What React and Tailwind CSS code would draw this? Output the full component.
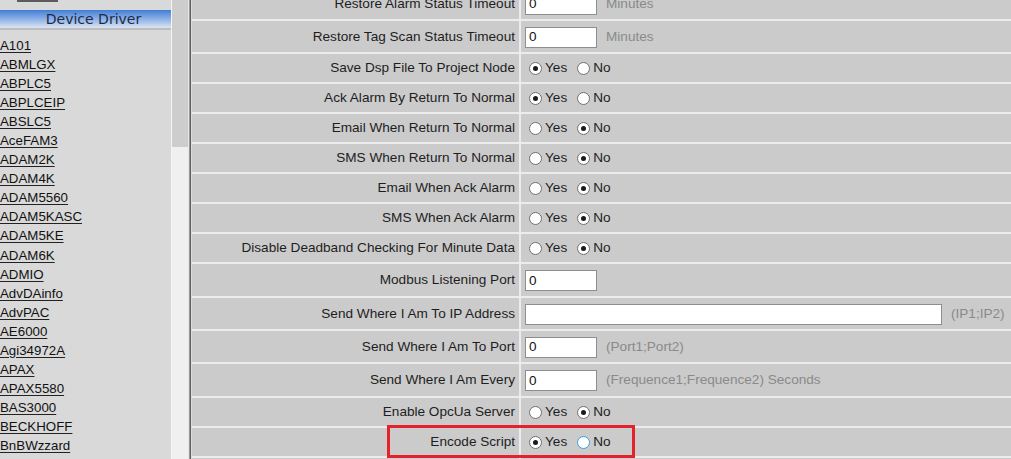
import React from "react";

const drivers = [
  "A101","ABMLGX","ABPLC5","ABPLCEIP","ABSLC5","AceFAM3","ADAM2K","ADAM4K","ADAM5560","ADAM5KASC","ADAM5KE","ADAM6K","ADMIO","AdvDAinfo","AdvPAC","AE6000","Agi34972A","APAX","APAX5580","BAS3000","BECKHOFF","BnBWzzard"
];

const rows = [
  { label: "Restore Alarm Status Timeout", type: "input", value: "0", hint: "Minutes", h: "h-[33px]" },
  { label: "Restore Tag Scan Status Timeout", type: "input", value: "0", hint: "Minutes", h: "h-[33px]" },
  { label: "Save Dsp File To Project Node", type: "radio", yes: true, h: "h-[30px]" },
  { label: "Ack Alarm By Return To Normal", type: "radio", yes: true, h: "h-[30px]" },
  { label: "Email When Return To Normal", type: "radio", yes: false, h: "h-[30px]" },
  { label: "SMS When Return To Normal", type: "radio", yes: false, h: "h-[30px]" },
  { label: "Email When Ack Alarm", type: "radio", yes: false, h: "h-[30px]" },
  { label: "SMS When Ack Alarm", type: "radio", yes: false, h: "h-[30px]" },
  { label: "Disable Deadband Checking For Minute Data", type: "radio", yes: false, h: "h-[30px]" },
  { label: "Modbus Listening Port", type: "input", value: "0", hint: "", h: "h-[34px]" },
  { label: "Send Where I Am To IP Address", type: "wide", value: "", hint: "(IP1;IP2)", h: "h-[33px]" },
  { label: "Send Where I Am To Port", type: "input", value: "0", hint: "(Port1;Port2)", h: "h-[33px]" },
  { label: "Send Where I Am Every", type: "input", value: "0", hint: "(Frequence1;Frequence2) Seconds", h: "h-[34px]" },
  { label: "Enable OpcUa Server", type: "radio", yes: false, h: "h-[30px]" },
  { label: "Encode Script", type: "radio", yes: true, hoverNo: true, h: "h-[30px]", boxed: true },
  { label: "", type: "blank", h: "h-[30px]" },
];

function Radio({ checked, hover, first }) {
  return (
    <span
      className={`inline-flex items-center justify-center w-[13px] h-[13px] rounded-full bg-white border shrink-0 ${
        hover ? "border-[#3d9be0]" : "border-[#707070]"
      } ${first ? "ml-[5px]" : "ml-[6px]"} mr-[3px]`}
    >
      {checked && <span className="w-[5px] h-[5px] rounded-full bg-[#1a1a1a]" />}
    </span>
  );
}

function TextBox({ value, wide }) {
  return (
    <span
      className={`ml-[1px] inline-flex items-center h-[21px] ${wide ? "w-[417px]" : "w-[72px]"} bg-white border border-[#8e8e8e] pl-[3px] text-[13.5px] text-[#111] leading-none shrink-0`}
    >
      {value}
    </span>
  );
}

function Row({ r }) {
  return (
    <div className={`relative flex ${r.h} border-b-2 border-[#ececec]`}>
      <div className="w-[327px] shrink-0 flex items-center justify-end pr-[4px] pt-[1px] text-[13.6px] text-[#1e1e1e]">
        {r.label}
      </div>
      <div className="flex-1 flex items-center border-l-2 border-[#ececec] pl-[3px] pt-[1px] text-[13.6px] text-[#1e1e1e]">
        {r.type === "radio" && (
          <>
            <Radio checked={r.yes} first />
            <span>Yes</span>
            <span className="w-[4px]" />
            <Radio checked={!r.yes} hover={r.hoverNo} />
            <span>No</span>
          </>
        )}
        {(r.type === "input" || r.type === "wide") && (
          <>
            <TextBox value={r.value} wide={r.type === "wide"} />
            {r.hint && <span className="ml-[9px] text-[#8a8a8a]">{r.hint}</span>}
          </>
        )}
      </div>
      {r.boxed && (
        <div className="absolute left-[195px] top-[-3px] w-[248px] h-[33px] border-[3px] border-[#e3222b] pointer-events-none" />
      )}
    </div>
  );
}

export default function App() {
  return (
    <div
      className="flex w-[1011px] h-[459px] overflow-hidden bg-[#cbcbcb]"
      style={{ fontFamily: '"Liberation Sans", Arial, sans-serif' }}
    >
      {/* sidebar */}
      <div className="w-[172px] shrink-0 h-full bg-[#d9d9d9] border-r border-[#f4f4f4] overflow-hidden">
        <div className="h-[10px]">
          <div className="ml-[17px] w-[41px] h-[2px] bg-[#5c5c5c]" />
        </div>
        <div
          className="h-[18px] flex items-center justify-center pl-[16px] text-[14px] text-[#1d2b48] bg-gradient-to-b from-[#3f7ed6] via-[#8db0e6] to-[#dde5f1]"
          style={{ fontFamily: '"DejaVu Sans", Verdana, sans-serif' }}
        >
          Device Driver
        </div>
        <div className="h-[2px] bg-[#bdbdbd]" />
        <div className="pt-[6px]">
          {drivers.map((d) => (
            <div key={d} className="h-[19.05px] leading-[19px] text-[13.3px] text-[#111]">
              <span className="underline underline-offset-[2px] decoration-[#222]">{d}</span>
            </div>
          ))}
        </div>
      </div>
      {/* scrollbar */}
      <div className="w-[16px] shrink-0 h-full bg-[#f0f0f0]">
        <div className="h-[147px] bg-[#cdcdcd]" />
      </div>
      {/* divider */}
      <div className="w-[4px] shrink-0 h-full flex">
        <div className="w-[1px] bg-[#e6e6e6]" />
        <div className="w-[1px] bg-[#9a9a9a]" />
        <div className="w-[1px] bg-[#5e5e5e]" />
        <div className="w-[1px] bg-[#dcdcdc]" />
      </div>
      {/* table */}
      <div className="flex-1 h-full">
        <div className="-mt-[12px]">
          {rows.map((r, i) => (
            <Row key={i} r={r} />
          ))}
        </div>
      </div>
    </div>
  );
}
